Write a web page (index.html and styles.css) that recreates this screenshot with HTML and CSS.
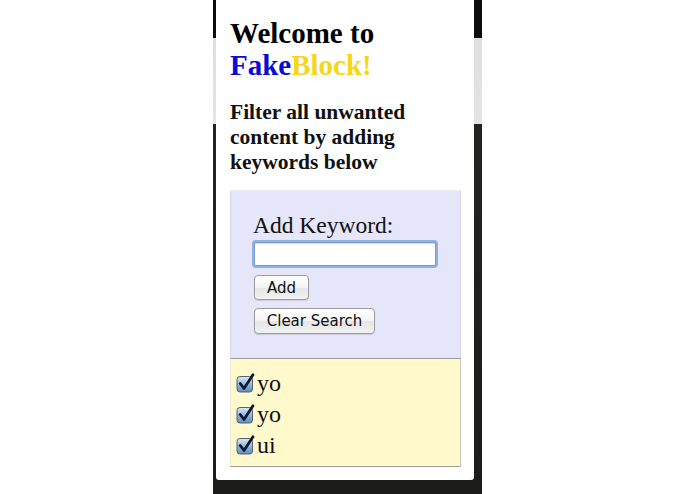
FILE: index.html
```html
<!DOCTYPE html>
<html>
<head>
<meta charset="utf-8">
<link rel="stylesheet" href="styles.css">
</head>
<body>
<div class="backdrop">
  <div class="popup">
    <h1 class="title">Welcome to<br><span class="fake">Fake</span><span class="block">Block!</span></h1>
    <p class="intro">Filter all unwanted content by adding keywords below</p>
    <div class="addbox">
      <div class="label">Add Keyword:</div>
      <input class="kw" type="text">
      <button class="btn add">Add</button>
      <button class="btn clear">Clear Search</button>
    </div>
    <div class="list">
      <div class="row"><svg class="cb" viewBox="0 0 20 20" width="20" height="20"><defs><linearGradient id="g1" x1="0" y1="0" x2="0" y2="1"><stop offset="0" stop-color="#dbe9f7"/><stop offset="0.5" stop-color="#94b8de"/><stop offset="1" stop-color="#5c8cc4"/></linearGradient></defs><rect x="1" y="3.5" width="15.5" height="15.5" rx="3" fill="url(#g1)" stroke="#56606e" stroke-width="1"/><path d="M4.2 10.5 L8 15.5 L17 1.8" fill="none" stroke="#0c1830" stroke-width="2.8" stroke-linecap="round" stroke-linejoin="round"/></svg><span>yo</span></div>
      <div class="row"><svg class="cb" viewBox="0 0 20 20" width="20" height="20"><rect x="1" y="3.5" width="15.5" height="15.5" rx="3" fill="url(#g1)" stroke="#56606e" stroke-width="1"/><path d="M4.2 10.5 L8 15.5 L17 1.8" fill="none" stroke="#0c1830" stroke-width="2.8" stroke-linecap="round" stroke-linejoin="round"/></svg><span>yo</span></div>
      <div class="row"><svg class="cb" viewBox="0 0 20 20" width="20" height="20"><rect x="1" y="3.5" width="15.5" height="15.5" rx="3" fill="url(#g1)" stroke="#56606e" stroke-width="1"/><path d="M4.2 10.5 L8 15.5 L17 1.8" fill="none" stroke="#0c1830" stroke-width="2.8" stroke-linecap="round" stroke-linejoin="round"/></svg><span>ui</span></div>
    </div>
  </div>
</div>
</body>
</html>
```
FILE: styles.css
```css
html, body {
  margin: 0;
  padding: 0;
  background: #ffffff;
  height: 494px;
  overflow: hidden;
}
.backdrop {
  margin-left: 213px;
  width: 269px;
  height: 494px;
  background: linear-gradient(to bottom, #0c0c0c 0, #0c0c0c 38px, #dedede 38px, #e4e4e4 124px, #232320 124px, #1c1c1a 494px);
  display: flex;
  padding-left: 3px;
  box-sizing: border-box;
}
.popup {
  width: 258px;
  height: 480px;
  background: #ffffff;
  border-radius: 0 0 3px 3px;
  box-sizing: border-box;
  padding: 17px 13px 0 14px;
  font-family: "Liberation Serif", "Times New Roman", serif;
  color: #000;
}
.title {
  margin: 0;
  font-size: 29px;
  line-height: 32px;
  font-weight: bold;
}
.fake { color: #0a0ad2; }
.block { color: #f6d617; }
.intro {
  margin: 19px 0 15px 0;
  font-size: 21.5px;
  line-height: 25px;
  font-weight: bold;
  color: #111;
}
.addbox {
  background: #e6e6fa;
  border-top: 1px solid #ececf6;
  border-left: 1px solid #d8d8e8;
  border-right: 1px solid #d8d8e8;
  border-bottom: 1px solid #9a9a9a;
  padding: 21px 0 24px 22px;
  display: flex;
  flex-direction: column;
  align-items: flex-start;
}
.label {
  font-size: 23.5px;
  line-height: 27px;
  color: #111;
}
.kw {
  margin: 3px 0 0 1px;
  width: 180px;
  height: 22px;
  box-sizing: content-box;
  padding: 0;
  border: 1px solid #7a9cc8;
  border-radius: 2px;
  background: #fff;
  box-shadow: 0 0 0 2px #8fb2e0, inset 0 1px 1px rgba(0,0,0,0.15);
  outline: none;
}
.btn {
  margin: 0 0 0 1px;
  font-family: "DejaVu Sans", "Lucida Grande", sans-serif;
  font-size: 15px;
  line-height: 18px;
  color: #111;
  background: linear-gradient(to bottom, #ffffff 0%, #f4f4f4 50%, #e6e6e6 51%, #f2f2f2 100%);
  border: 1px solid #9c9c9c;
  border-radius: 4px;
  padding: 2px 9px 3px 9px;
  box-shadow: 0 1px 1px rgba(0,0,0,0.12);
}
.add {
  margin-top: 9px;
  width: 55px;
  height: 25px;
  padding: 0;
}
.clear {
  margin-top: 8px;
  width: 121px;
  height: 26px;
  padding: 0;
}
.list {
  background: #fff9cb;
  border-right: 1px solid #c8c8b8;
  border-bottom: 1px solid #9a9a9a;
  border-left: 1px solid #ecebd8;
  padding: 9px 0 5px 5px;
}
.row {
  display: flex;
  align-items: center;
  height: 31px;
  font-size: 24px;
  color: #111;
}
.cb {
  margin-right: 1px;
  flex: none;
  position: relative;
  top: -1px;
}
```
